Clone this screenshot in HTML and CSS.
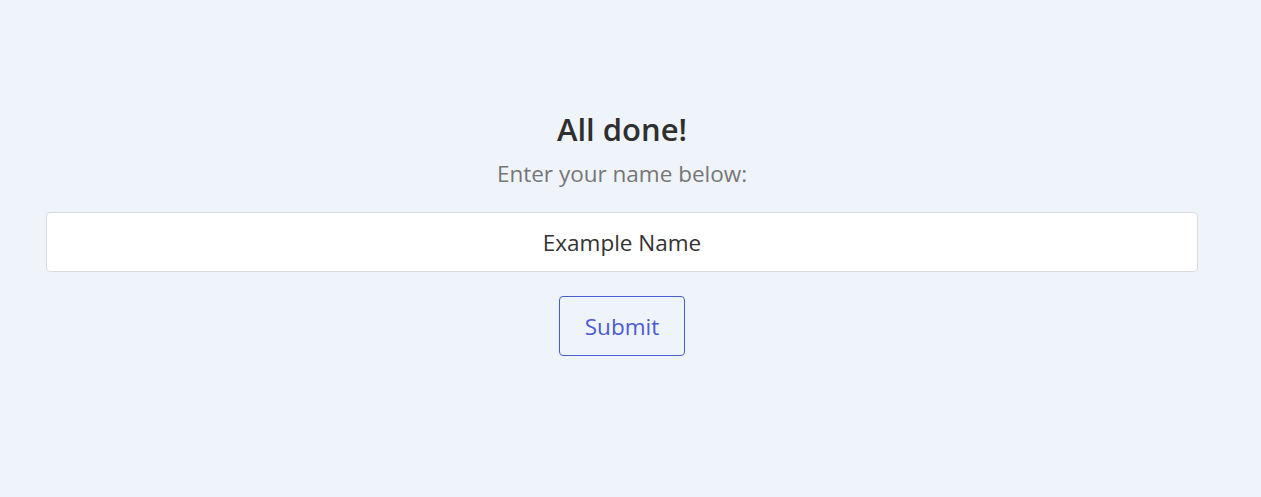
FILE: index.html
```html
<!DOCTYPE html>
<html>
<head>
<meta charset="utf-8">
<link rel="stylesheet" href="styles.css">
</head>
<body>
<main class="page">
  <section class="panel">
    <h1 class="title">All done!</h1>
    <p class="subtitle">Enter your name below:</p>
    <input class="name-input" type="text" value="Example Name">
    <button class="submit-btn" type="button">Submit</button>
  </section>
</main>
</body>
</html>
```

FILE: styles.css
```css
html, body {
  margin: 0;
  padding: 0;
  background: #eff4fb;
  height: 100%;
}
body {
  font-family: "Open Sans", "Noto Sans", sans-serif;
}
.page {
  padding: 108px 63px 0 46px;
}
.panel {
  display: flex;
  flex-direction: column;
  align-items: center;
}
.title {
  margin: 0;
  font-size: 31px;
  font-weight: 600;
  color: #2f2f2f;
  line-height: 42px;
}
.subtitle {
  margin: 9px 0 0;
  font-size: 22.5px;
  color: #767676;
  line-height: 30px;
}
.name-input {
  box-sizing: border-box;
  width: 100%;
  height: 60px;
  margin-top: 23px;
  border: 1px solid #d9dbdf;
  border-radius: 4px;
  background: #fff;
  text-align: center;
  font-family: inherit;
  font-size: 22.5px;
  color: #333;
  outline: none;
}
.submit-btn {
  box-sizing: border-box;
  margin-top: 24px;
  width: 126px;
  height: 60px;
  border: 1px solid #4a5bd0;
  border-radius: 4px;
  background: transparent;
  color: #4c5ad2;
  font-family: inherit;
  font-size: 22.5px;
}
```
